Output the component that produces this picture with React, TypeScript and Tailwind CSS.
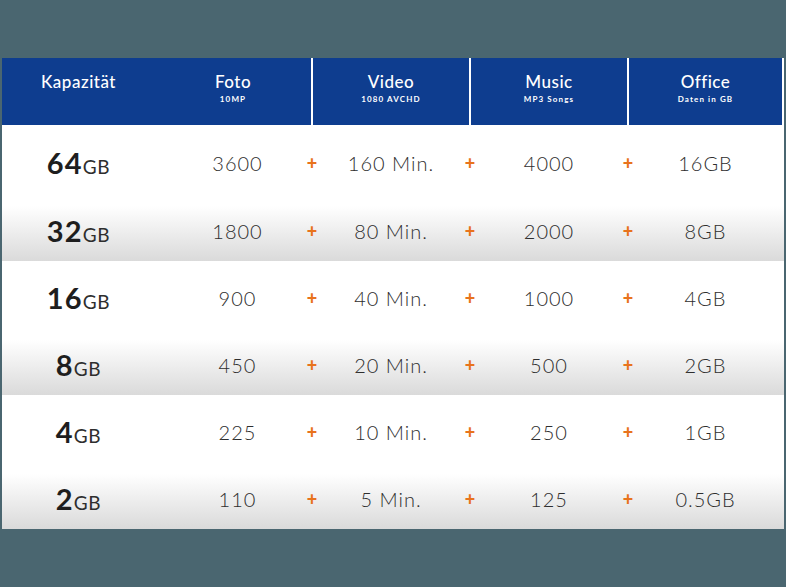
import React from "react";

type Row = { size: string; foto: string; video: string; music: string; office: string };

const rows: Row[] = [
  { size: "64", foto: "3600", video: "160 Min.", music: "4000", office: "16GB" },
  { size: "32", foto: "1800", video: "80 Min.", music: "2000", office: "8GB" },
  { size: "16", foto: "900", video: "40 Min.", music: "1000", office: "4GB" },
  { size: "8", foto: "450", video: "20 Min.", music: "500", office: "2GB" },
  { size: "4", foto: "225", video: "10 Min.", music: "250", office: "1GB" },
  { size: "2", foto: "110", video: "5 Min.", music: "125", office: "0.5GB" },
];

const headers = [
  { title: "Kapazität", sub: "" },
  { title: "Foto", sub: "10MP" },
  { title: "Video", sub: "1080 AVCHD" },
  { title: "Music", sub: "MP3 Songs" },
  { title: "Office", sub: "Daten in GB" },
];

const cols = "grid grid-cols-[153px_156px_2px_156px_2px_156px_2px_153px]";
const val = "flex items-center justify-center text-[20px] font-light tracking-[0.05em]";

function Plus() {
  // zero-width column, plus sign centred on the divider line
  return (
    <div className="flex items-center justify-center overflow-visible">
      <span className="text-[18px] font-black text-[#e8731c] leading-none">+</span>
    </div>
  );
}

function HeaderCell({ title, sub }: { title: string; sub: string }) {
  return (
    <div className="bg-[#0e3d8f] flex flex-col items-center pt-[14px]">
      <span className="text-[17px] font-medium text-white leading-[20px] tracking-[0.03em]">{title}</span>
      {sub && (
        <span className="text-[8px] font-bold text-white tracking-[0.14em] leading-[10px] mt-[2px]">
          {sub}
        </span>
      )}
    </div>
  );
}

export default function App() {
  return (
    <div
      className="w-[786px] h-[587px] bg-[#4a6670] pt-[58px] pl-[2px]"
      style={{ fontFamily: "Lato, 'Open Sans', sans-serif" }}
    >
      <div className="w-[782px]">
        {/* Header bar */}
        <div className={`${cols} h-[67px] bg-white`}>
          <HeaderCell {...headers[0]} />
          <HeaderCell {...headers[1]} />
          <div className="bg-white" />
          <HeaderCell {...headers[2]} />
          <div className="bg-white" />
          <HeaderCell {...headers[3]} />
          <div className="bg-white" />
          <HeaderCell {...headers[4]} />
        </div>

        {/* Capacity rows, odd ones with grey fade */}
        {rows.map((r, i) => (
          <div
            key={r.size}
            className={`${cols} ${i === 0 ? "h-[69px]" : "h-[67px]"} pt-[7px] ${
              i % 2 === 1 ? "bg-linear-to-b from-white from-[18%] to-[#dadada]" : "bg-white"
            } text-[#2e2e2e]`}
          >
            <div className="flex items-center justify-center">
              <span className="flex items-baseline">
                <span className="text-[29px] font-bold text-[#1e1e1e] tracking-[0.04em]">{r.size}</span>
                <span className="text-[19px] font-normal text-[#2e2e2e] tracking-[0.04em]">GB</span>
              </span>
            </div>
            <div className={`${val} pl-[9px]`}>{r.foto}</div>
            <Plus />
            <div className={val}>{r.video}</div>
            <Plus />
            <div className={val}>{r.music}</div>
            <Plus />
            <div className={val}>{r.office}</div>
          </div>
        ))}
      </div>
    </div>
  );
}
